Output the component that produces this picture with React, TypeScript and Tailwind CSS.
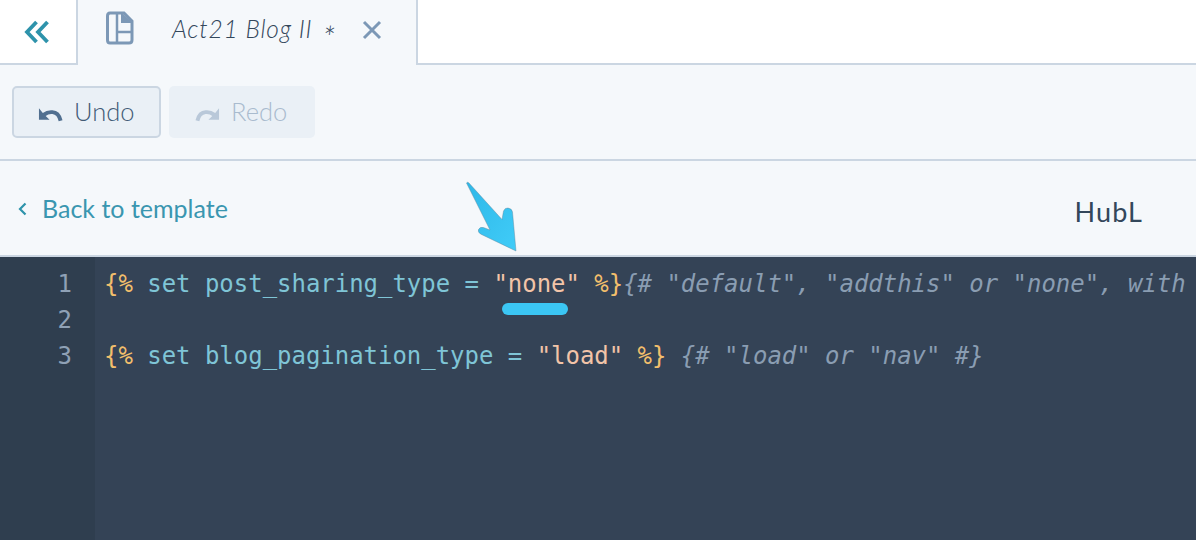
import React from 'react';

const mono = "font-['DejaVu_Sans_Mono','Liberation_Mono',monospace]";

function Tag({ children }: { children: React.ReactNode }) {
  return <span className="text-[#f2bf6c]">{children}</span>;
}

function Kw({ children }: { children: React.ReactNode }) {
  return <span className="text-[#7fc5d6]">{children}</span>;
}

function Str({ children }: { children: React.ReactNode }) {
  return <span className="text-[#f2c4a8]">{children}</span>;
}

function Note({ children }: { children: React.ReactNode }) {
  return <span className="italic text-[#8a9db2]">{children}</span>;
}

function ArrowMark() {
  return (
    <svg className="absolute left-[460px] top-[176px]" width="64" height="82" viewBox="460 176 64 82">
      <defs>
        <linearGradient id="arrowFill" x1="0" y1="0" x2="1" y2="1">
          <stop offset="0" stopColor="#2fb8e8" />
          <stop offset="1" stopColor="#40ccf8" />
        </linearGradient>
      </defs>
      <path
        d="M466.5 183 Q467.5 181.5 469 183 L502 219.5 L503.5 211 Q505 207.5 508 208 Q512 208.5 512.5 212 L516 251 L480.5 234 Q477.5 232 478.5 229.5 Q480 226.5 483.5 227.5 L490 230 Z"
        fill="url(#arrowFill)"
        stroke="#5f7f92"
        strokeWidth="0.4"
      />
    </svg>
  );
}

export default function App() {
  return (
    <div className="relative flex h-[540px] w-[1196px] flex-col overflow-hidden bg-[#f5f8fb] font-['Lato',sans-serif]">
      <div className="flex h-[65px] bg-white">
        <div className="flex w-[78px] items-center justify-center border-r-2 border-b-2 border-[#cbd6e2] pr-[3px]">
          <svg width="26" height="24" viewBox="0 0 26 24" fill="none" stroke="#2e93ab" strokeWidth="3.8">
            <path d="M12.5 2 L3 12 L12.5 22" />
            <path d="M23.5 2 L14 12 L23.5 22" />
          </svg>
        </div>
        <div className="flex w-[340px] items-center border-r-2 border-[#cbd6e2] bg-[#f5f8fb] pl-[28px]">
          <svg width="28" height="34" viewBox="0 0 28 34" className="mb-[9px]">
            <path d="M4 2 H18 L26 10 V29 Q26 32 23 32 H4 Q1.500 32 1.500 29 V5 Q1.500 2 4 2 Z" fill="none" stroke="#7c98b6" strokeWidth="3" />
            <path d="M15 1 L27 12 H15 Z" fill="#7c98b6" />
            <path d="M11 3 V31 M11 21 H25" fill="none" stroke="#7c98b6" strokeWidth="2.500" />
          </svg>
          <span className="ml-[38px] mb-[6px] whitespace-nowrap text-[24.500px] font-light italic tracking-[0.8px] text-[#33475b]">Act21 Blog II</span>
          <span className="ml-[10px] mt-[8px] text-[32px] leading-none font-light italic text-[#33475b]">*</span>
          <svg width="20" height="20" viewBox="0 0 20 20" className="ml-[27px] mb-[5px]" fill="none" stroke="#7c98b6" strokeWidth="3">
            <path d="M2 2 L18 18 M18 2 L2 18" />
          </svg>
        </div>
        <div className="flex-1 border-b-2 border-[#cbd6e2]" />
      </div>

      <div className="flex h-[96px] items-start gap-2 border-b-2 border-[#cbd6e2] pl-3 pt-[21px]">
        <button className="flex h-[52px] w-[149px] items-center rounded-[5px] border-2 border-[#cbd6e2] bg-[#eaf0f6] pb-[2px] pl-[24px] text-[25.500px] font-light text-[#425b76]">
          <svg width="25" height="14" viewBox="0 0 26 14" className="mr-[11px] mt-[7px]">
            <path d="M1 0 V12 H12 L8 8 Q11 5.500 15 6 Q20 6.500 21.500 13.500 L25.500 12.500 Q23 2 15 2 Q9 1.500 5 5 Z" fill="#516f90" />
          </svg>
          Undo
        </button>
        <button className="flex h-[52px] w-[146px] items-center rounded-[5px] bg-[#eaf0f6] pb-[2px] pl-[26px] text-[25.500px] font-light text-[#a9bbce]">
          <svg width="25" height="14" viewBox="0 0 26 14" className="mr-[11px] mt-[7px] -scale-x-100">
            <path d="M1 0 V12 H12 L8 8 Q11 5.500 15 6 Q20 6.500 21.500 13.500 L25.500 12.500 Q23 2 15 2 Q9 1.500 5 5 Z" fill="#b9c8d9" />
          </svg>
          Redo
        </button>
      </div>

      <div className="flex h-[94px] items-center justify-between pl-[18px] pr-[53px]">
        <a className="mt-[2px] flex items-center text-[25px] text-[#3a96b0]">
          <svg width="9" height="14" viewBox="0 0 9 14" fill="none" stroke="#2e93ab" strokeWidth="2.200" className="mr-[15px]">
            <path d="M7.500 1.500 L2 7 L7.500 12.500" />
          </svg>
          Back to template
        </a>
        <span className="mt-[8px] text-[27px] tracking-[1.1px] text-[#33475b]">HubL</span>
      </div>

      <div className={`flex flex-1 border-t-2 border-[#cbd6e2] bg-[#344356] text-[23.960px] leading-[36px] ${mono}`}>
        <div className="w-[95px] shrink-0 bg-[#2f3e4f] pt-[9px] pr-[23px] text-right text-[#8fa1b6]">
          <div>1</div>
          <div>2</div>
          <div>3</div>
        </div>
        <div className="min-w-0 flex-1 overflow-hidden whitespace-pre pl-[9px] pt-[9px]">
          <div>
            <Tag>{'{%'}</Tag> <Kw>set post_sharing_type = </Kw><Str>"none"</Str> <Tag>{'%}'}</Tag><Note>{'{# "default", "addthis" or "none", with'}</Note>
          </div>
          <div>{' '}</div>
          <div>
            <Tag>{'{%'}</Tag> <Kw>set blog_pagination_type = </Kw><Str>"load"</Str> <Tag>{'%}'}</Tag> <Note>{'{# "load" or "nav" #}'}</Note>
          </div>
        </div>
      </div>

      <ArrowMark />
      <div className="absolute left-[502px] top-[303px] h-[12px] w-[66px] rounded-full bg-[#3bc6f4]" />
    </div>
  );
}
